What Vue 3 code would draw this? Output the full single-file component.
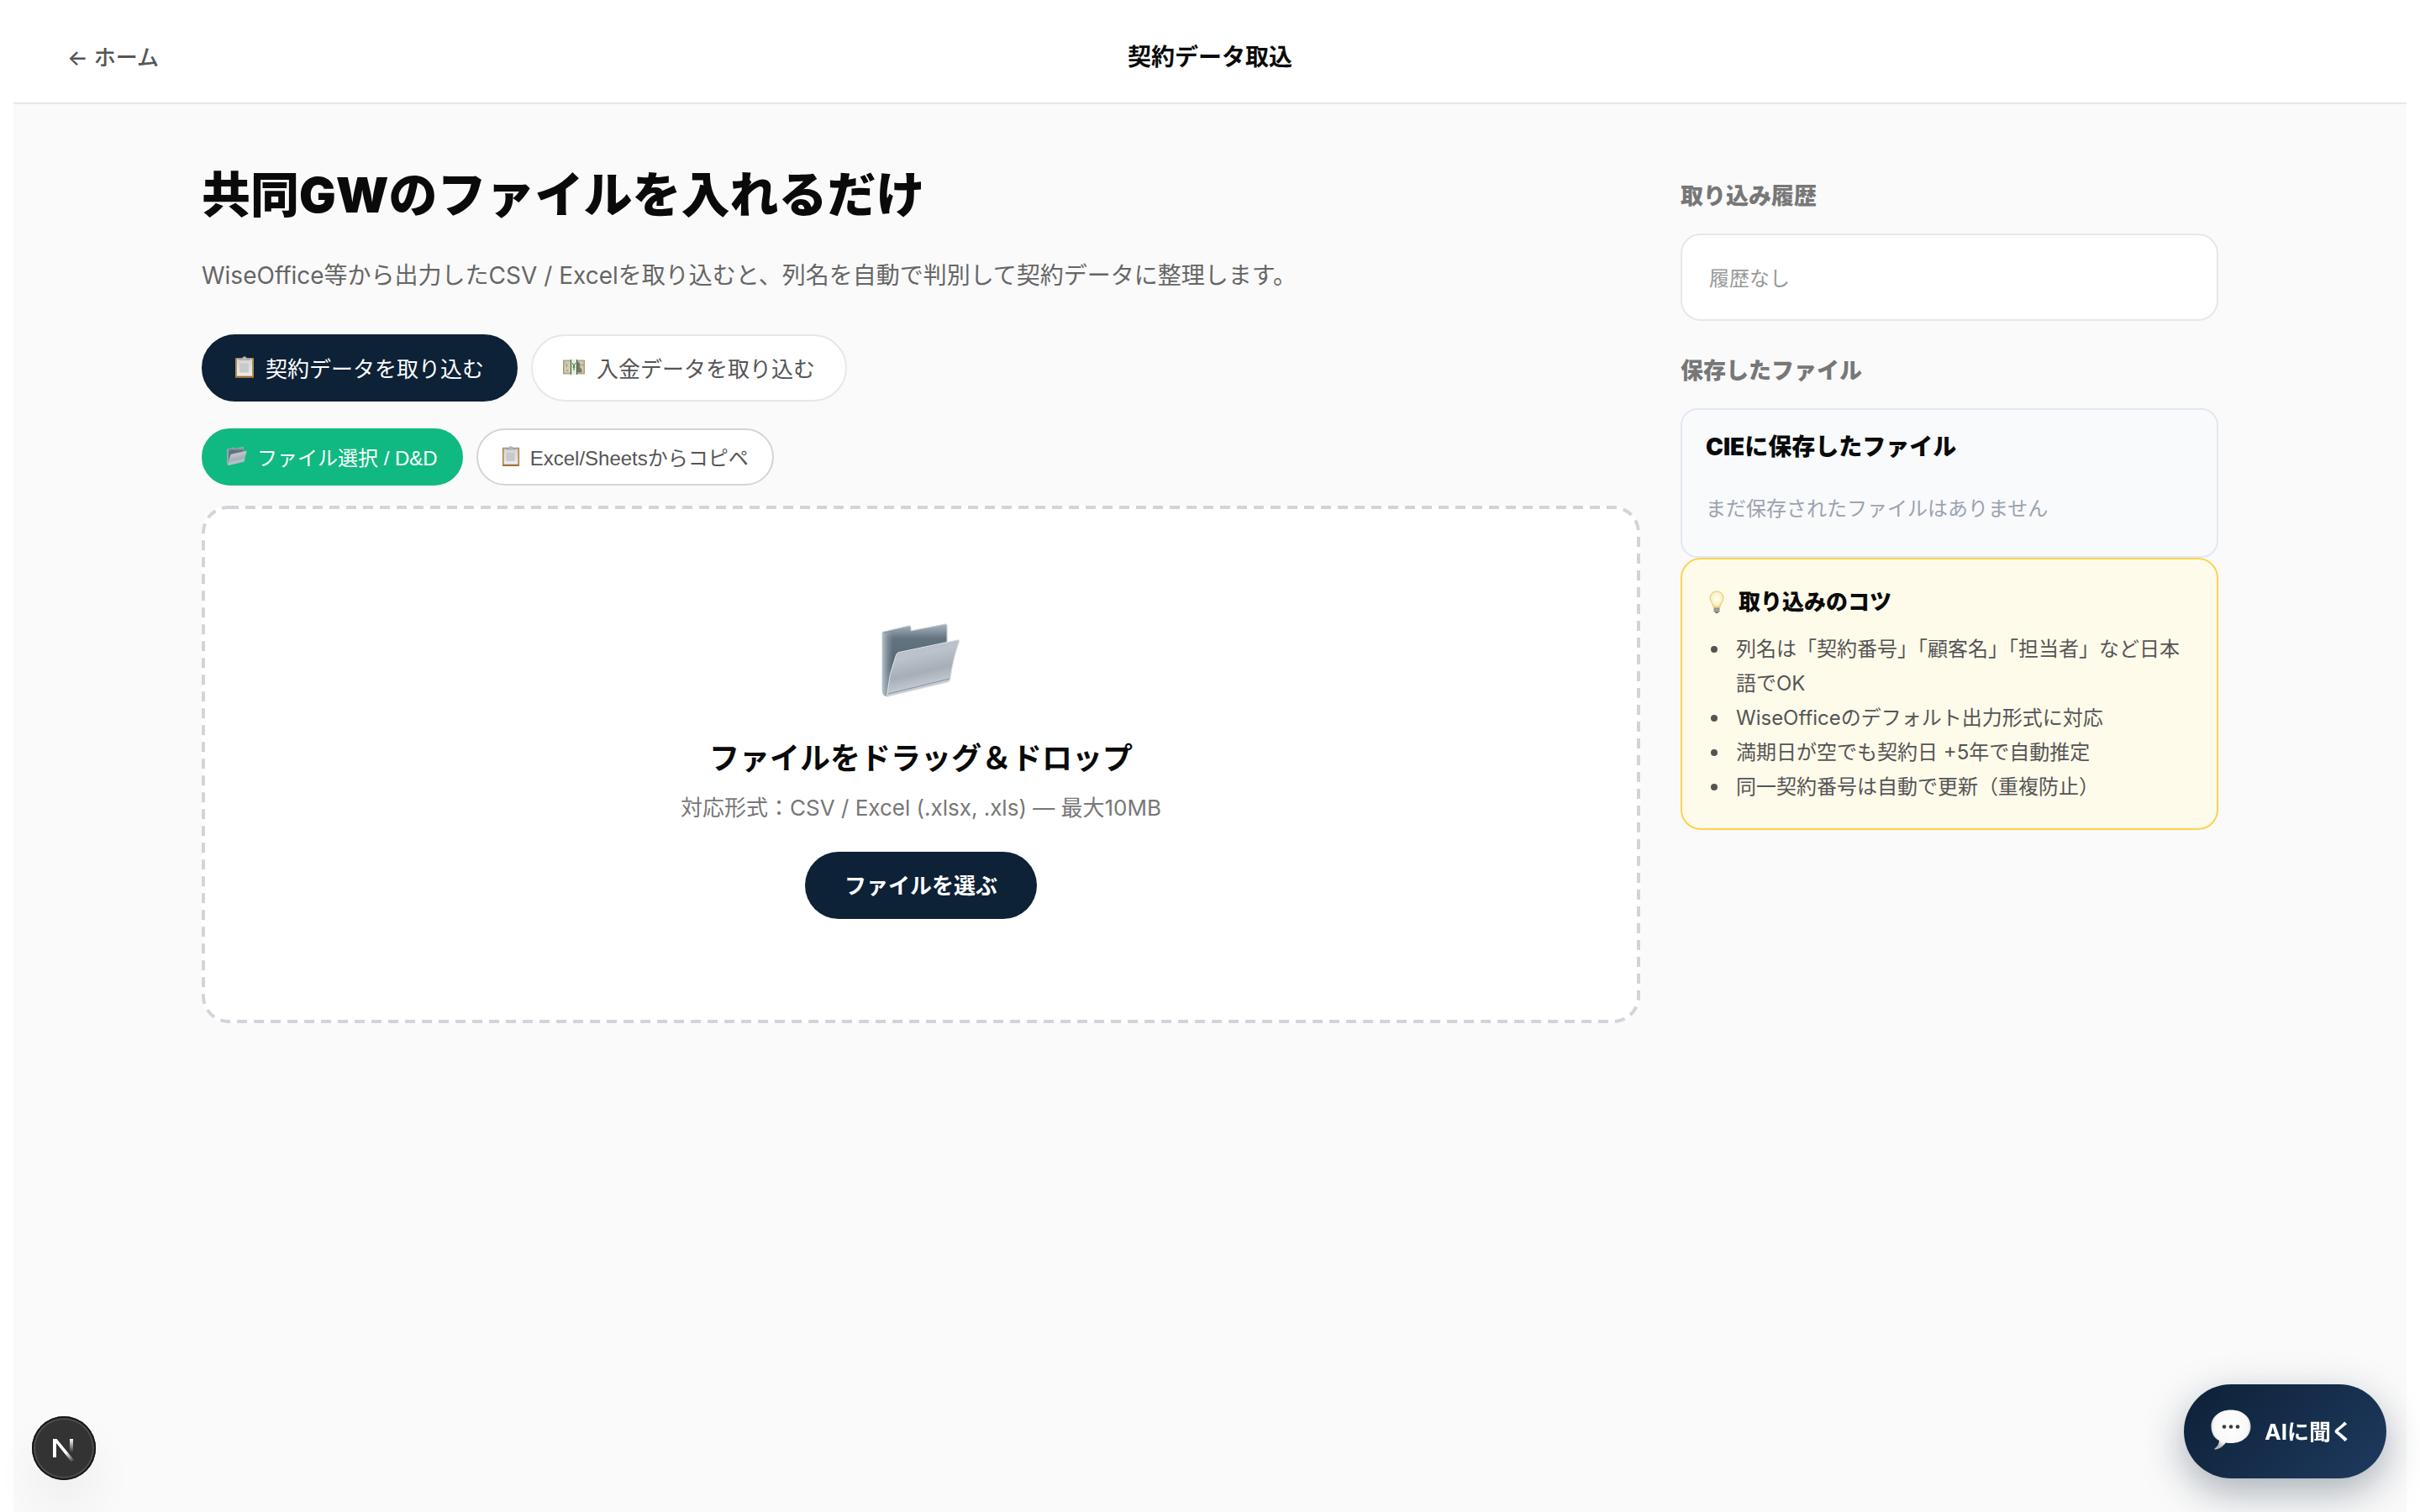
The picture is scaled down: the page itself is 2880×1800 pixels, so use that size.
<script setup>
import { ref } from 'vue'

const mode = ref('contract')
const source = ref('file')

const tips = [
  '列名は「契約番号」「顧客名」「担当者」など日本語でOK',
  'WiseOfficeのデフォルト出力形式に対応',
  '満期日が空でも契約日 +5年で自動推定',
  '同一契約番号は自動で更新（重複防止）'
]
</script>

<template>
  <!-- shared gradients and shapes for the icons -->
  <svg class="defs" aria-hidden="true">
    <defs>
      <linearGradient id="folderBack" x1="0" y1="0" x2="0" y2="1">
        <stop offset="0" stop-color="#a9b5bf" />
        <stop offset="0.2" stop-color="#63737f" />
        <stop offset="0.6" stop-color="#566673" />
        <stop offset="1" stop-color="#7f909d" />
      </linearGradient>
      <linearGradient id="folderSide" x1="0" y1="0" x2="1" y2="0">
        <stop offset="0" stop-color="#b4c0ca" />
        <stop offset="1" stop-color="#8595a1" stop-opacity="0" />
      </linearGradient>
      <linearGradient id="folderFront" x1="0.2" y1="0" x2="0.5" y2="1">
        <stop offset="0" stop-color="#b3bac3" />
        <stop offset="0.3" stop-color="#bcc3cc" />
        <stop offset="0.6" stop-color="#a6aeb8" />
        <stop offset="0.85" stop-color="#c6cbd4" />
        <stop offset="1" stop-color="#98a3ae" />
      </linearGradient>
      <linearGradient id="paper" x1="0" y1="0" x2="0" y2="1">
        <stop offset="0" stop-color="#d4d4d4" />
        <stop offset="1" stop-color="#ececec" />
      </linearGradient>
      <radialGradient id="bulbGlass" cx="0.5" cy="0.45" r="0.6">
        <stop offset="0" stop-color="#ffffff" />
        <stop offset="0.6" stop-color="#fdf3c4" />
        <stop offset="1" stop-color="#ecd27a" />
      </radialGradient>
      <radialGradient id="bubble" cx="0.5" cy="0.42" r="0.58">
        <stop offset="0" stop-color="#ffffff" />
        <stop offset="0.75" stop-color="#f8f8f8" />
        <stop offset="1" stop-color="#b5b5b5" />
      </radialGradient>
      <linearGradient id="nDiag" x1="42" y1="42" x2="50" y2="54" gradientUnits="userSpaceOnUse">
        <stop offset="0" stop-color="#fff" />
        <stop offset="1" stop-color="#fff" stop-opacity="0" />
      </linearGradient>
      <linearGradient id="nStem" x1="0" y1="27" x2="0" y2="43" gradientUnits="userSpaceOnUse">
        <stop offset="0" stop-color="#fff" />
        <stop offset="1" stop-color="#fff" stop-opacity="0" />
      </linearGradient>
      <symbol id="folder" viewBox="0 0 94 88">
        <path d="M1 12 Q1 10 3 10 L33 3 Q35 3 35 5 L35 9 L76 1 Q78 1 78 3 L78 60 L7 87 Q1 87 1 78 Z" fill="url(#folderBack)" stroke="#c3ced6" stroke-width="1" />
        <path d="M1 12 L14 9 L14 60 L6 87 Q1 87 1 78 Z" fill="url(#folderSide)" />
        <path d="M17 39 Q18 35 21 34.500 L90 20 Q93 19 92.500 22 Q85 42 82 66 Q82 69 79 70 L8 87 Q6 88 7 83 Q9 60 17 39 Z" fill="url(#folderFront)" stroke="#dbe1e7" stroke-width="1" />
        <path d="M8 84 L81 66" stroke="#8694a0" stroke-width="1" fill="none" />
      </symbol>
      <symbol id="clipboard" viewBox="0 0 22 26">
        <rect x="0" y="2" width="22" height="24" rx="1" fill="#b58b52" />
        <path d="M0.500 24.500 H21.500 V25.500 H0.500 Z" fill="#7b5526" />
        <rect x="2" y="3.500" width="18" height="20" fill="url(#paper)" />
        <rect x="5" y="8.500" width="11" height="11" fill="#c9c9c9" />
        <path d="M5 4.500 V3 H8.500 Q8.500 0.500 11 0.500 Q13.500 0.500 13.500 3 H17 V4.500 Z" fill="#b9bdc1" stroke="#8c9196" stroke-width="0.500" />
      </symbol>
    </defs>
  </svg>

  <div class="page">
    <header>
      <a href="#" class="back">← ホーム</a>
      <p class="title">契約データ取込</p>
      <span></span>
    </header>

    <main>
      <section class="import">
        <h1>共同GWのファイルを入れるだけ</h1>
        <p class="lead">WiseOffice等から出力したCSV / Excelを取り込むと、列名を自動で判別して契約データに整理します。</p>

        <div class="modes">
          <button type="button" :class="{ active: mode === 'contract' }" @click="mode = 'contract'">
            <svg class="clip" aria-hidden="true"><use href="#clipboard" /></svg>
            契約データを取り込む
          </button>
          <button type="button" :class="{ active: mode === 'payment' }" @click="mode = 'payment'">
            <svg class="money" viewBox="0 0 26 18" aria-hidden="true">
              <rect x="0.500" y="1" width="25" height="16" fill="#bdb795" stroke="#97916f" stroke-width="0.800" />
              <rect x="2" y="2.500" width="22" height="13" fill="#d2cdb2" />
              <path d="M18 2.500 Q22 5 20 9 Q24 12 22 15.500 H17 V2.500 Z" fill="#7d7866" />
              <path d="M3 4.500 Q6 6 4 9 M4 13 H6 M23 5 V8" stroke="#8a8568" fill="none" />
              <rect x="9" y="0" width="8" height="18" fill="#dff0dc" />
              <path d="M9.500 0 V18 M16.500 0 V18" stroke="#3f5a41" />
              <path d="M11 4 L13 8 L15 4 M13 8 V13 M11.500 9 H14.500" stroke="#2f6d35" fill="none" />
            </svg>
            入金データを取り込む
          </button>
        </div>

        <div class="sources">
          <button type="button" :class="{ active: source === 'file' }" @click="source = 'file'">
            <svg class="dir" aria-hidden="true"><use href="#folder" /></svg>
            ファイル選択 / D&amp;D
          </button>
          <button type="button" :class="{ active: source === 'paste' }" @click="source = 'paste'">
            <svg class="clip" aria-hidden="true"><use href="#clipboard" /></svg>
            Excel/Sheetsからコピペ
          </button>
        </div>

        <div class="dropzone">
          <svg class="outline" aria-hidden="true"><rect x="2" y="2" rx="30" /></svg>
          <svg class="big" aria-hidden="true"><use href="#folder" /></svg>
          <h2>ファイルをドラッグ＆ドロップ</h2>
          <p>対応形式：CSV / Excel (.xlsx, .xls) — 最大10MB</p>
          <button type="button">ファイルを選ぶ</button>
        </div>
      </section>

      <aside>
        <h3>取り込み履歴</h3>
        <div class="card history">履歴なし</div>

        <h3>保存したファイル</h3>
        <div class="card saved">
          <h4>CIEに保存したファイル</h4>
          <p>まだ保存されたファイルはありません</p>
        </div>

        <div class="card tips">
          <h4>
            <svg viewBox="0 0 18 28" aria-hidden="true">
              <path d="M9 1 C4 1 1 4.500 1 9 C1 13 4.500 15 5 20 H13 C13.500 15 17 13 17 9 C17 4.500 14 1 9 1 Z" fill="url(#bulbGlass)" stroke="#e3cb83" />
              <path d="M5.500 20 H12.500 V24.500 L10.500 27 H7.500 L5.500 24.500 Z" fill="#b9b6ae" />
              <path d="M5.500 22 H12.500 M5.500 24.500 H12.500" stroke="#77746c" />
              <path d="M7.500 26.500 H10.500" stroke="#444" />
            </svg>
            取り込みのコツ
          </h4>
          <ul>
            <li v-for="tip in tips" :key="tip">{{ tip }}</li>
          </ul>
        </div>
      </aside>
    </main>

    <button type="button" class="devtools" aria-label="Next.js">
      <svg viewBox="0 0 76 76" aria-hidden="true">
        <rect x="25" y="27" width="4" height="22" fill="#fff" />
        <path d="M25 27 H29.500 L50 52 L47 54.500 Z" fill="url(#nDiag)" />
        <rect x="45" y="27" width="4" height="16" fill="url(#nStem)" />
      </svg>
    </button>

    <button type="button" class="chat">
      <svg viewBox="0 0 48 48" aria-hidden="true">
        <path d="M24 0.500 C10 0.500 0.500 9 0.500 20 C0.500 28 4 34 10 37 C10 41 8 44 4.500 46.500 C4 47.500 5 47.800 6 47.500 C12 46.500 15 43 18 39.500 C20 40 22 40 24 40 C38 40 47.500 31.500 47.500 20 C47.500 9 38 0.500 24 0.500 Z" fill="url(#bubble)" />
        <circle cx="16" cy="20.500" r="2.300" fill="#3c3c3c" />
        <circle cx="24" cy="20.500" r="2.300" fill="#3c3c3c" />
        <circle cx="32" cy="20.500" r="2.300" fill="#3c3c3c" />
      </svg>
      AIに聞く
    </button>
  </div>
</template>

<style>
body {
  background: #fff;
}
</style>

<style scoped>
* {
  box-sizing: border-box;
  margin: 0;
}

.defs {
  position: absolute;
  width: 0;
  height: 0;
}

.page {
  min-height: 100vh;
  margin: 0 16px;
  background: #fafafa;
  color: #0a0a0a;
  font-family: Inter, "Noto Sans CJK JP", sans-serif;
}

header {
  display: grid;
  grid-template-columns: 1fr auto 1fr;
  align-items: center;
  height: 124px;
  padding: 12px 64px 2px;
  background: #fff;
  border-bottom: 2px solid #e5e7eb;
}

.back {
  justify-self: start;
  color: #555;
  font-size: 26px;
  font-weight: 500;
  text-decoration: none;
}

.title {
  font-size: 28px;
  font-weight: 700;
}

main {
  display: grid;
  grid-template-columns: 1fr 640px;
  gap: 48px;
  align-items: start;
  max-width: 2400px;
  margin: 0 auto;
  padding: 64px 0;
}

h1 {
  margin-bottom: 28px;
  font-size: 58px;
  font-weight: 900;
  line-height: 88px;
}

.lead {
  margin-bottom: 46px;
  color: #666;
  font-size: 28px;
  line-height: 48px;
}

button {
  display: flex;
  align-items: center;
  border: none;
  font-family: "Liberation Sans", "Noto Sans CJK JP", sans-serif;
  cursor: pointer;
}

.modes,
.sources {
  display: flex;
  gap: 16px;
}

.modes {
  margin-bottom: 32px;
}

.modes button {
  gap: 14px;
  height: 80px;
  padding: 0 36px 2px;
  border: 2px solid #e5e7eb;
  border-radius: 40px;
  background: #fff;
  color: #555;
  font-size: 26px;
}

.modes button.active {
  padding: 0 38px 2px;
  border-color: #0d2137;
  background: #0d2137;
  color: #fff;
}

.modes .clip {
  width: 22px;
  height: 26px;
}

.modes .money {
  width: 26px;
  height: 18px;
}

.sources {
  margin-bottom: 24px;
}

.sources button {
  gap: 12px;
  height: 68px;
  padding: 0 28px 2px;
  border: 2px solid #d1d5db;
  border-radius: 34px;
  background: #fff;
  color: #555;
  font-size: 24px;
}

.sources button.active {
  border-color: #10b981;
  background: #10b981;
  color: #fff;
}

.sources .clip {
  width: 22px;
  height: 24px;
}

.sources .dir {
  width: 24px;
  height: 22px;
}

.dropzone {
  position: relative;
  display: flex;
  flex-direction: column;
  align-items: center;
  padding: 140px 52px 124px;
  border-radius: 32px;
  background: #fff;
}

/* a drawn outline, so that the dashes are longer than a dashed border gives */
.outline {
  position: absolute;
  inset: 0;
  width: 100%;
  height: 100%;
}

.outline rect {
  width: calc(100% - 4px);
  height: calc(100% - 4px);
  fill: none;
  stroke: #d1d5db;
  stroke-width: 4px;
  stroke-dasharray: 12 8;
}

.dropzone .big {
  width: 94px;
  height: 88px;
  margin-bottom: 46px;
}

.dropzone h2 {
  margin-bottom: 12px;
  font-size: 36px;
  font-weight: 700;
  line-height: 54px;
}

.dropzone p {
  margin-bottom: 32px;
  color: #777;
  font-size: 26px;
  line-height: 40px;
}

.dropzone button {
  position: relative;
  height: 80px;
  padding: 0 47px 4px;
  border-radius: 40px;
  background: #0d2137;
  color: #fff;
  font-size: 26px;
  font-weight: 700;
}

aside {
  padding-top: 24px;
}

h3 {
  margin-bottom: 22px;
  color: #777;
  font-size: 27px;
  font-weight: 800;
  line-height: 44px;
}

.card {
  padding: 32px;
  border: 2px solid #e5e7eb;
  border-radius: 24px;
  font-size: 24px;
}

.history {
  margin-bottom: 38px;
  padding: 34px 32px 30px;
  background: #fff;
  color: #999;
  line-height: 36px;
}

.card.saved {
  padding: 24px 28px 36px;
  border-color: #e2e8f0;
  border-radius: 20px;
  background: #f8fafc;
}

.saved h4 {
  margin-bottom: 34px;
  font-size: 28px;
  font-weight: 900;
  line-height: 40px;
}

.saved p {
  color: #9ca3af;
  line-height: 40px;
}

.card.tips {
  padding: 32px 32px 29px;
  border-color: #fcd34d;
  background: #fffbeb;
}

.tips h4 {
  display: flex;
  align-items: center;
  gap: 17px;
  margin-bottom: 16px;
  font-size: 26px;
  font-weight: 900;
  line-height: 38px;
}

.tips svg {
  width: 18px;
  height: 28px;
}

.tips ul {
  padding: 0;
  color: #555;
  line-height: 41px;
  list-style: none;
}

.tips li {
  display: flex;
  gap: 22px;
}

.tips li::before {
  content: "";
  flex: none;
  width: 8px;
  height: 8px;
  margin: 17px 0 0 2px;
  border-radius: 50%;
  background: #555;
}

.devtools {
  position: fixed;
  left: 38px;
  bottom: 38px;
  width: 76px;
  height: 76px;
  padding: 0;
  border-radius: 50%;
  background: #333;
  box-shadow: inset 0 0 0 2px #171717, inset 0 0 0 4px #4d4d4d, 0 32px 64px -16px rgba(0, 0, 0, 0.16);
}

.devtools svg {
  width: 76px;
  height: 76px;
}

.chat {
  position: fixed;
  right: 40px;
  bottom: 40px;
  gap: 16px;
  height: 112px;
  padding: 0 40px 4px 32px;
  border-radius: 56px;
  background: linear-gradient(135deg, #0d2137, #1e3a5f);
  box-shadow: 0 16px 48px rgba(13, 33, 55, 0.35);
  color: #fff;
  font-family: Inter, "Noto Sans CJK JP", sans-serif;
  font-size: 26px;
  font-weight: 700;
}

.chat svg {
  width: 48px;
  height: 48px;
}
</style>
